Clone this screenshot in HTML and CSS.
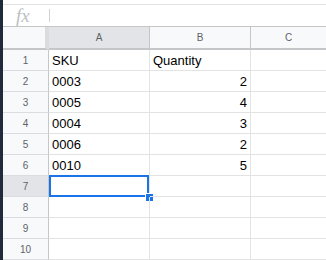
FILE: index.html
```html
<!DOCTYPE html>
<html>
<head>
    <title>Sheet</title>
    <link rel="stylesheet" href="styles.css">
</head>
<body>
    <div class="edge"></div>
    <div class="main">
        <div class="topgap"></div>
        <div class="fxbar">
            <span class="fx">fx</span>
            <span class="fxsep"></span>
        </div>
        <div class="sheet">
            <div class="corner"></div>
            <div class="colhead active">A</div>
            <div class="colhead">B</div>
            <div class="colhead last">C</div>

            <div class="rowhead">1</div>
            <div class="cell">SKU</div>
            <div class="cell">Quantity</div>
            <div class="cell last"></div>

            <div class="rowhead">2</div>
            <div class="cell">0003</div>
            <div class="cell num">2</div>
            <div class="cell last"></div>

            <div class="rowhead">3</div>
            <div class="cell">0005</div>
            <div class="cell num">4</div>
            <div class="cell last"></div>

            <div class="rowhead">4</div>
            <div class="cell">0004</div>
            <div class="cell num">3</div>
            <div class="cell last"></div>

            <div class="rowhead">5</div>
            <div class="cell">0006</div>
            <div class="cell num">2</div>
            <div class="cell last"></div>

            <div class="rowhead">6</div>
            <div class="cell">0010</div>
            <div class="cell num">5</div>
            <div class="cell last"></div>

            <div class="rowhead active">7</div>
            <div class="cell selected"><span class="handle"></span></div>
            <div class="cell"></div>
            <div class="cell last"></div>

            <div class="rowhead">8</div>
            <div class="cell"></div>
            <div class="cell"></div>
            <div class="cell last"></div>

            <div class="rowhead">9</div>
            <div class="cell"></div>
            <div class="cell"></div>
            <div class="cell last"></div>

            <div class="rowhead">10</div>
            <div class="cell"></div>
            <div class="cell"></div>
            <div class="cell last"></div>
        </div>
    </div>
</body>
</html>
```

FILE: styles.css
```css
body { margin: 0; display: flex; height: 260px; overflow: hidden; background: #fff; font-family: "Liberation Sans", Arial, sans-serif; }
.edge { width: 3px; background: #1f2a3a; flex: none; }
.main { flex: 1; display: flex; flex-direction: column; }
.topgap { height: 4px; border-bottom: 1px solid #e2e3e5; }
.fxbar { height: 23px; border-bottom: 1px solid #c4c7c5; display: flex; align-items: center; }
.fx { font-family: "Liberation Serif", serif; font-style: italic; font-size: 19px; color: #bcc0c4; margin-left: 13px; width: 33px; line-height: 1; }
.fxsep { width: 1px; height: 13px; background: #d0d2d4; }

.sheet { display: grid; grid-template-columns: 46px 101px 101px 1fr; grid-auto-rows: 21px; grid-template-rows: 23px; }
.corner { background: #f8f9fa; border-right: 4px solid #dadcdf; border-bottom: 2px solid #c4c6c8; }
.colhead { background: #f8f9fa; border-right: 1px solid #c4c6c8; border-bottom: 2px solid #c4c6c8; color: #5f6368; font-size: 10px; display: flex; align-items: center; justify-content: center; }
.colhead.active { background: #e2e4e7; }
.rowhead { background: #f8f9fa; border-right: 1px solid #c4c6c8; border-bottom: 1px solid #dadcdf; color: #5f6368; font-size: 10px; display: flex; align-items: center; justify-content: center; }
.rowhead.active { background: #e2e4e7; }
.cell { border-right: 1px solid #e2e3e3; border-bottom: 1px solid #e2e3e3; font-size: 13px; color: #000; padding: 0 3px; display: flex; align-items: center; position: relative; }
.cell.num { justify-content: flex-end; }
.last { border-right: none; }
.selected { box-shadow: 0 0 0 2px #1a73e8 inset; margin: -1px 0 0 0; border-bottom: 0; height: 22px; }
.handle { position: absolute; right: -4px; bottom: -4px; width: 7px; height: 7px; background: #1a73e8; box-shadow: 0 0 0 1px #fff; }
```
